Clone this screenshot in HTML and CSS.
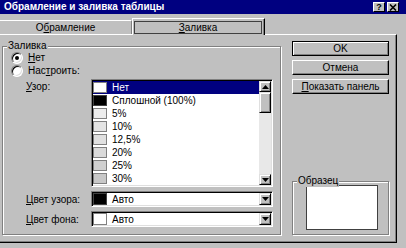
FILE: index.html
```html
<!DOCTYPE html>
<html lang="ru">
<head>
    <meta charset="UTF-8">
    <title>Обрамление и заливка таблицы</title>
    <link rel="stylesheet" href="styles.css">
</head>
<body>
    <div class="titlebar">
        <span class="title">Обрамление и заливка таблицы</span>
        <div class="tb-buttons">
            <span class="tb-btn">?</span>
            <span class="tb-btn">
                <svg width="8" height="7" viewBox="0 0 8 7"><path d="M1 0.5 L7 6.5 M7 0.5 L1 6.5" stroke="#000" stroke-width="1.6"/></svg>
            </span>
        </div>
    </div>

    <div class="tabs">
        <div class="tab">О<u>б</u>рамление</div>
        <div class="tab active"><span class="focus"><u>З</u>аливка</span></div>
    </div>

    <div class="panel">
        <div class="group fill">
            <span class="legend">Заливка</span>
            <div class="radio"><span class="dot checked"></span><span><u>Н</u>ет</span></div>
            <div class="radio"><span class="dot"></span><span>Нас<u>т</u>роить:</span></div>

            <div class="field pattern">
                <span class="lbl"><u>У</u>зор:</span>
                <div class="listbox">
                    <div class="items">
                        <div class="item selected"><span class="swatch white"></span>Нет</div>
                        <div class="item"><span class="swatch black"></span>Сплошной (100%)</div>
                        <div class="item"><span class="swatch p5"></span>5%</div>
                        <div class="item"><span class="swatch p10"></span>10%</div>
                        <div class="item"><span class="swatch p12"></span>12,5%</div>
                        <div class="item"><span class="swatch p20"></span>20%</div>
                        <div class="item"><span class="swatch p25"></span>25%</div>
                        <div class="item"><span class="swatch p30"></span>30%</div>
                    </div>
                    <div class="scrollbar">
                        <span class="sb-btn">
                            <svg width="7" height="4" viewBox="0 0 7 4"><path d="M3.5 0 L7 4 L0 4 Z" fill="#000"/></svg>
                        </span>
                        <span class="sb-thumb"></span>
                        <span class="sb-track"></span>
                        <span class="sb-btn">
                            <svg width="7" height="4" viewBox="0 0 7 4"><path d="M0 0 L7 0 L3.5 4 Z" fill="#000"/></svg>
                        </span>
                    </div>
                </div>
            </div>

            <div class="field">
                <span class="lbl"><u>Ц</u>вет узора:</span>
                <div class="combo">
                    <span class="swatch black"></span>
                    <span class="combo-text">Авто</span>
                    <span class="drop">
                        <svg width="7" height="4" viewBox="0 0 7 4"><path d="M0 0 L7 0 L3.5 4 Z" fill="#000"/></svg>
                    </span>
                </div>
            </div>
            <div class="field">
                <span class="lbl"><u>Ц</u>вет фона:</span>
                <div class="combo">
                    <span class="swatch white"></span>
                    <span class="combo-text">Авто</span>
                    <span class="drop">
                        <svg width="7" height="4" viewBox="0 0 7 4"><path d="M0 0 L7 0 L3.5 4 Z" fill="#000"/></svg>
                    </span>
                </div>
            </div>
        </div>

        <div class="side">
            <button class="btn default">OK</button>
            <button class="btn">Отмена</button>
            <button class="btn"><u>П</u>оказать панель</button>
            <div class="group sample">
                <span class="legend">Образец</span>
                <div class="preview"></div>
            </div>
        </div>
    </div>
</body>
</html>
```

FILE: styles.css
```css
body {
    font-family: 'Liberation Sans', Arial, sans-serif;
    font-size: 10px;
    background: #c0c0c0;
    color: #000;
    margin: 0;
    width: 406px;
    height: 248px;
    overflow: hidden;
}
u {
    text-decoration: underline;
    text-underline-offset: 1px;
}
.titlebar {
    height: 14px;
    background: #000080;
    color: #fff;
    display: flex;
    align-items: center;
    justify-content: space-between;
    padding: 0 7px 0 4px;
}
.title {
    font-weight: bold;
    font-size: 10px;
    line-height: 14px;
}
.tb-buttons {
    display: flex;
    gap: 2px;
}
.tb-btn {
    width: 12px;
    height: 10px;
    box-sizing: border-box;
    background: #c0c0c0;
    color: #000;
    font-weight: bold;
    font-size: 9px;
    line-height: 9px;
    display: flex;
    align-items: center;
    justify-content: center;
    border-top: 1px solid #fff;
    border-left: 1px solid #fff;
    border-right: 1px solid #000;
    border-bottom: 1px solid #000;
}
.tabs {
    height: 20px;
    display: flex;
    align-items: flex-end;
}
.tab {
    width: 132px;
    height: 14px;
    box-sizing: border-box;
    border-top: 1px solid #fff;
    border-right: 1px solid #808080;
    text-align: center;
    line-height: 13px;
}
.tab.active {
    width: 133px;
    height: 17px;
    margin-bottom: -1px;
    border-left: 1px solid #fff;
    border-right: 1px solid #000;
    box-shadow: inset -1px 0 #808080;
    background: #c0c0c0;
    position: relative;
    z-index: 1;
    padding-top: 2px;
}
.focus {
    display: block;
    margin: 0 2px 0 1px;
    height: 13px;
    box-sizing: border-box;
    border: 1px solid #404040;
    line-height: 11px;
}
.panel {
    width: 397px;
    height: 209px;
    box-sizing: border-box;
    border-top: 1px solid #fff;
    border-right: 1px solid #000;
    border-bottom: 1px solid #000;
    box-shadow: inset -1px -1px #808080;
    padding: 6px 0 0 2px;
    display: flex;
    gap: 11px;
}
.group {
    position: relative;
    box-sizing: border-box;
    border: 1px solid #808080;
    box-shadow: inset 1px 1px #fff, 1px 1px #fff;
}
.legend {
    position: absolute;
    top: -7px;
    left: 4px;
    padding: 0 1px;
    line-height: 12px;
    background: #c0c0c0;
}
.fill {
    width: 279px;
    height: 189px;
    margin-top: 5px;
    padding-top: 4px;
}
.radio {
    display: flex;
    align-items: center;
    gap: 5px;
    height: 13px;
    margin-left: 8px;
}
.dot {
    width: 12px;
    height: 12px;
    box-sizing: border-box;
    border-radius: 50%;
    background: #fff;
    border: 1px solid;
    border-color: #808080 #fff #fff #808080;
    box-shadow: inset 1px 1px #000, inset -1px -1px #dfdfdf;
    display: flex;
    align-items: center;
    justify-content: center;
}
.dot.checked::after {
    content: "";
    width: 4px;
    height: 4px;
    border-radius: 50%;
    background: #000;
}
.field {
    display: flex;
    align-items: center;
    margin: 4px 0 0 23px;
}
.field.pattern {
    align-items: flex-start;
    margin-top: 2px;
}
.lbl {
    width: 65px;
    flex: none;
}
.pattern .lbl {
    padding-top: 2px;
}
.listbox, .combo {
    width: 182px;
    box-sizing: border-box;
    background: #fff;
    border: 1px solid;
    border-color: #808080 #fff #fff #808080;
    box-shadow: inset 1px 1px #000, inset -1px -1px #dfdfdf;
    padding: 1px;
    display: flex;
}
.listbox {
    height: 108px;
}
.items {
    flex: 1;
}
.item {
    height: 13px;
    display: flex;
    align-items: center;
    gap: 5px;
    white-space: nowrap;
}
.item.selected {
    background: #000080;
    color: #fff;
}
.swatch {
    width: 14px;
    height: 11px;
    box-sizing: border-box;
    border: 1px solid #808080;
    flex: none;
}
.swatch.white { background: #fff; }
.swatch.black { background: #000; border-color: #404040; }
.swatch.p5 { background: #ececec; }
.swatch.p10 { background: #e4e4e4; }
.swatch.p12 { background: #e0e0e0; }
.swatch.p20 { background: #dadada; }
.swatch.p25 { background: #d0d0d0; }
.swatch.p30 { background: #c8c8c8; }
.scrollbar {
    width: 12px;
    display: flex;
    flex-direction: column;
    background: #e8e8e8;
}
.sb-btn, .sb-thumb, .drop {
    box-sizing: border-box;
    background: #c0c0c0;
    border-top: 1px solid #dfdfdf;
    border-left: 1px solid #dfdfdf;
    border-right: 1px solid #000;
    border-bottom: 1px solid #000;
    box-shadow: inset 1px 1px #fff, inset -1px -1px #808080;
    display: flex;
    align-items: center;
    justify-content: center;
}
.sb-btn {
    height: 11px;
}
.sb-thumb {
    height: 21px;
}
.sb-track {
    flex: 1;
}
.combo {
    height: 16px;
    align-items: center;
}
.combo .swatch {
    height: 12px;
}
.combo-text {
    flex: 1;
    margin-left: 5px;
}
.drop {
    width: 12px;
    height: 12px;
}
.side {
    width: 97px;
    height: 194px;
    display: flex;
    flex-direction: column;
    gap: 4px;
}
.btn {
    height: 15px;
    padding: 0;
    font: inherit;
    color: #000;
    background: #c0c0c0;
    border-top: 1px solid #fff;
    border-left: 1px solid #fff;
    border-right: 1px solid #000;
    border-bottom: 1px solid #000;
    box-shadow: inset -1px -1px #808080;
    line-height: 12px;
}
.btn.default {
    border: 1px solid #000;
    box-shadow: inset 1px 1px #fff, inset -1px -1px #808080;
}
.sample {
    margin-top: auto;
    height: 54px;
    padding: 3px 10px 0 13px;
}
.preview {
    height: 45px;
    box-sizing: border-box;
    background: #fff;
    border: 1px solid #404040;
}
```
